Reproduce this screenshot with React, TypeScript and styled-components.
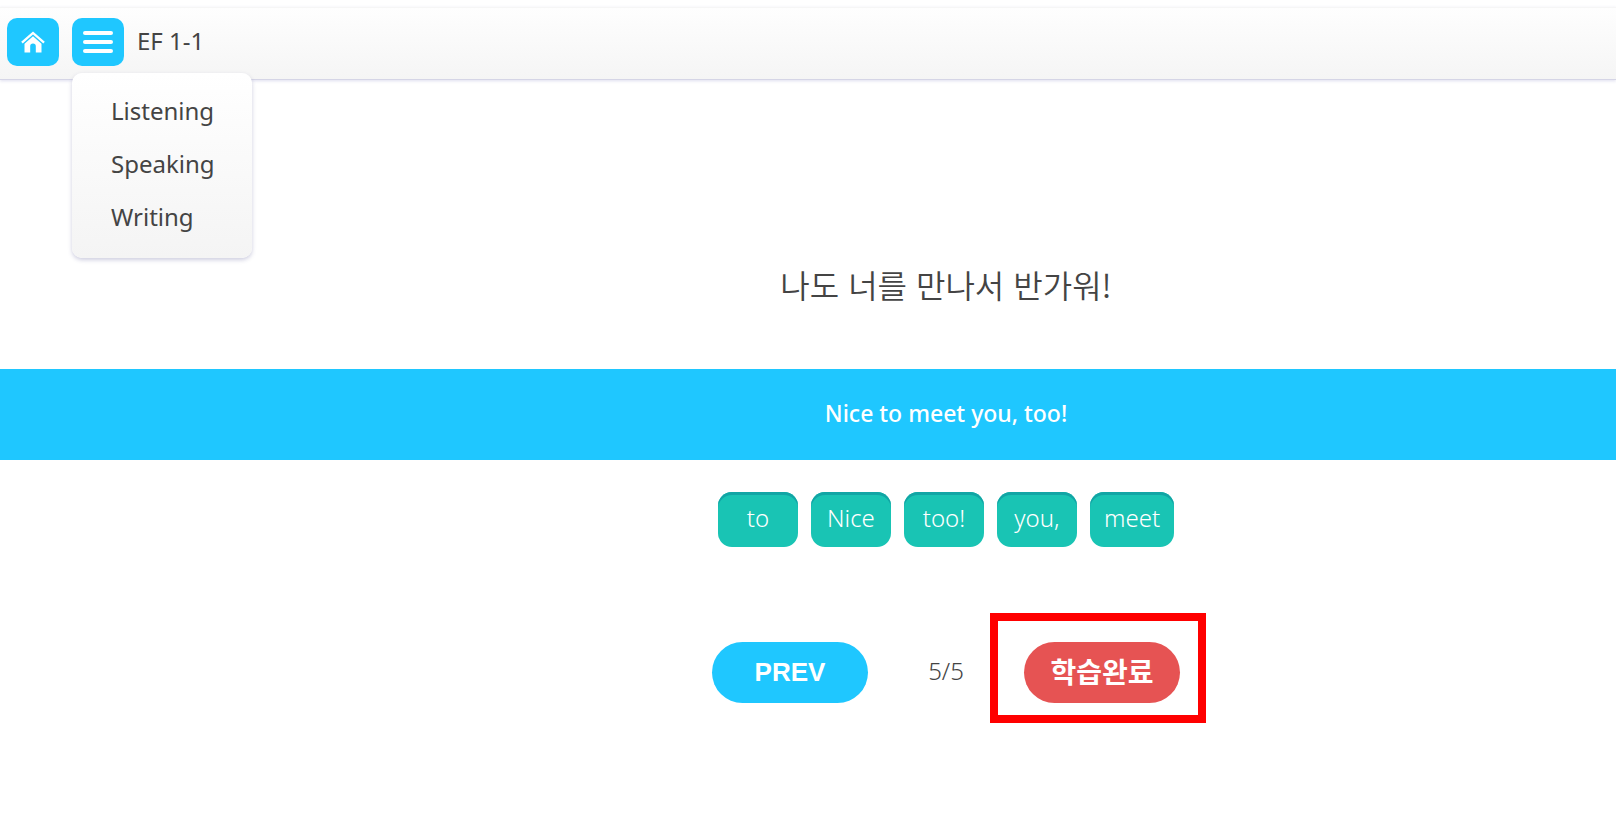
import React, { useState } from "react";
import styled, { createGlobalStyle } from "styled-components";

const sky = "#1fc7ff";
const ink = "#444444";

const GlobalStyle = createGlobalStyle`
  *, *::before, *::after { box-sizing: border-box; }
  body {
    margin: 0;
    background: #fff;
    color: ${ink};
    font-family: "Noto Sans", "Noto Sans CJK KR", sans-serif;
    font-size: 24px;
  }
  button { font: inherit; border: 0; padding: 0; cursor: pointer; }
`;

const Page = styled.div`
  padding-top: 7px;
`;

const Header = styled.header`
  display: flex;
  align-items: center;
  gap: 13px;
  height: 73px;
  padding: 0 7px 3px;
  background: linear-gradient(#fefefe, #f5f5f5);
  border-top: 1px solid #f6f6f6;
  border-bottom: 1px solid #d5d5e6;
  box-shadow: 0 1px 3px rgba(90, 90, 170, 0.2);
`;

const IconButton = styled.button`
  display: flex;
  align-items: center;
  justify-content: center;
  width: 52px;
  height: 48px;
  border-radius: 10px;
  background: ${sky};
  color: #fff;
`;

const MenuAnchor = styled.nav`
  position: relative;
`;

const Menu = styled.ul`
  position: absolute;
  top: 55px;
  left: 0;
  z-index: 1;
  width: 180px;
  margin: 0;
  padding: 11px 0 15px;
  list-style: none;
  border-radius: 10px;
  background: linear-gradient(#fff, #f4f4f4);
  box-shadow: 0 2px 4px rgba(90, 90, 150, 0.3);
`;

const MenuLink = styled.a`
  display: block;
  padding: 0 39px;
  line-height: 53px;
  color: ${ink};
  text-decoration: none;
`;

const Title = styled.h1`
  margin: 0;
  padding-bottom: 4px;
  font-size: 24px;
  font-weight: 400;
`;

const centred = `
  display: flex;
  align-items: center;
  justify-content: center;
  padding-left: 276px;
`;

const Question = styled.p`
  ${centred}
  margin: 0;
  padding-top: 180px;
  height: 289px;
  align-items: flex-start;
  font-family: "Noto Sans CJK KR", sans-serif;
  font-size: 32px;
  font-weight: 350;
  line-height: 48px;
`;

const Answer = styled.p`
  ${centred}
  margin: 0;
  height: 91px;
  padding-bottom: 4px;
  background: ${sky};
  color: #fff;
  font-size: 23px;
  font-weight: 500;
  line-height: 32px;
`;

const Words = styled.div`
  ${centred}
  gap: 13px;
  padding-top: 32px;
`;

const Word = styled.button`
  min-width: 80px;
  height: 55px;
  padding: 0 14px 4px;
  border-radius: 14px;
  background: #19c4b4;
  box-shadow: inset 0 3px 0 #12a5a5;
  color: #fff;
  font-weight: 300;
`;

const Pager = styled.div`
  ${centred}
  padding-top: 95px;
  padding-bottom: 60px;
`;

const PagerButton = styled.button<{ $color: string; $korean?: boolean }>`
  width: 156px;
  height: 61px;
  padding-bottom: ${(p) => (p.$korean ? 4 : 0)}px;
  border-radius: 31px;
  background: ${(p) => p.$color};
  color: #fff;
  font-family: "Liberation Sans", "Noto Sans CJK KR", sans-serif;
  font-size: ${(p) => (p.$korean ? 28 : 26)}px;
  font-weight: 700;
`;

const Count = styled.span`
  width: 156px;
  padding-bottom: 4px;
  text-align: center;
  font-weight: 300;
`;

const Marked = styled.div`
  position: relative;
  display: flex;

  &::after {
    content: "";
    position: absolute;
    inset: -29px -26px -20px -34px;
    border: 8px solid #ff0000;
    pointer-events: none;
  }
`;

const sections = ["Listening", "Speaking", "Writing"];
const words = ["to", "Nice", "too!", "you,", "meet"];

export default function App() {
  const [open, setOpen] = useState(true);
  return (
    <Page>
      <GlobalStyle />
      <Header>
        <IconButton aria-label="Home">
          <svg width="24" height="22" viewBox="0 0 24 22" fill="currentColor">
            <path d="M12 0.4 L23.8 10.8 L22.3 12.6 L12 3.6 L1.7 12.6 L0.2 10.8 Z" />
            <path d="M12 5.2 L20.5 12.8 V21.5 H14.8 V15.3 A2.8 2.8 0 0 0 9.2 15.3 V21.5 H3.5 V12.8 Z" />
          </svg>
        </IconButton>
        <MenuAnchor>
          <IconButton aria-label="Menu" aria-expanded={open} onClick={() => setOpen(!open)}>
            <svg width="30" height="22" viewBox="0 0 30 22" fill="currentColor">
              <rect width="30" height="4" rx="2" />
              <rect y="9" width="30" height="4" rx="2" />
              <rect y="18" width="30" height="4" rx="2" />
            </svg>
          </IconButton>
          {open && (
            <Menu>
              {sections.map((s) => (
                <li key={s}>
                  <MenuLink href={`#${s.toLowerCase()}`}>{s}</MenuLink>
                </li>
              ))}
            </Menu>
          )}
        </MenuAnchor>
        <Title>EF 1-1</Title>
      </Header>
      <main>
        <Question lang="ko">나도 너를 만나서 반가워!</Question>
        <Answer>Nice to meet you, too!</Answer>
        <Words>
          {words.map((w) => (
            <Word key={w}>{w}</Word>
          ))}
        </Words>
        <Pager>
          <PagerButton $color={sky}>PREV</PagerButton>
          <Count>5/5</Count>
          <Marked>
            <PagerButton $color="#e65353" $korean lang="ko">학습완료</PagerButton>
          </Marked>
        </Pager>
      </main>
    </Page>
  );
}
